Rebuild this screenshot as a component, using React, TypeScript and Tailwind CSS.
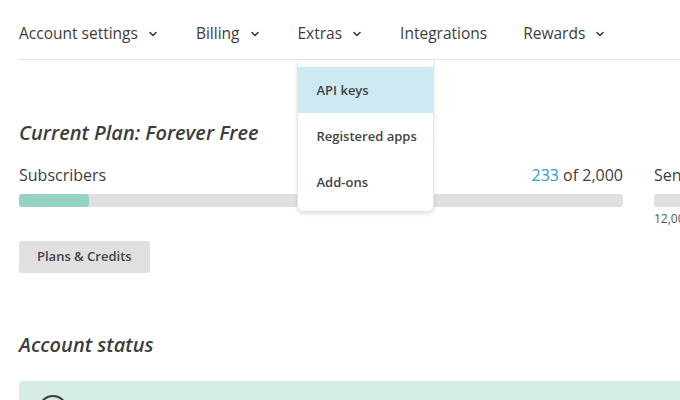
import { ChevronDown } from "lucide-react";

// Account page header with the "Extras" menu open.
const FONT = "font-['Open_Sans','Liberation_Sans',sans-serif]";

const navItems = [
  { label: "Account settings", menu: true },
  { label: "Billing", menu: true },
  { label: "Extras", menu: true, open: true },
  { label: "Integrations", menu: false },
  { label: "Rewards", menu: true }
];

const extras = [
  { label: "API keys", active: true },
  { label: "Registered apps", active: false },
  { label: "Add-ons", active: false }
];

function ExtrasMenu() {
  return (
    <div className="absolute left-[-1px] top-[39px] z-20 w-[137px] rounded-b-md border-x border-b border-[#e6e6e6] bg-white pb-[6px] pt-[6px] shadow-[0_2px_4px_rgba(0,0,0,0.12)]">
      {extras.map((it) => (
        <div
          key={it.label}
          className={[
            "flex h-[46px] items-center pl-[19px] text-[13px] font-semibold text-[#444]",
            it.active ? "bg-[#cde9f1]" : ""
          ].join(" ")}
        >
          {it.label}
        </div>
      ))}
    </div>
  );
}

function Usage({ label, used, total, pct, note }: { label: string; used: string; total: string; pct: number; note?: string }) {
  return (
    <div className="w-[604px] shrink-0">
      <div className="flex h-[24px] items-center justify-between text-[16px] text-[#3d3d3d]">
        <span>{label}</span>
        <span>
          <span className="text-[#2d9dc2]">{used}</span> of {total}
        </span>
      </div>
      <div className="mt-[7px] h-[13px] overflow-hidden rounded-[3px] bg-[#e0e0e0]">
        <div className="h-full rounded-[3px] bg-[#94d3c2]" style={{ width: `${pct}%` }} />
      </div>
      {note && <div className="mt-[4px] text-[12px] leading-[16px] text-[#555]">{note}</div>}
    </div>
  );
}

export default function App() {
  return (
    <div className={`${FONT} h-[400px] w-full overflow-hidden bg-white text-[#3d3d3d]`}>
      <nav className="ml-[19px] flex h-[60px] items-center gap-[36px] border-b border-[#e3e3e3] pt-[9px]">
        {navItems.map((it) => (
          <div key={it.label} className="relative flex items-center text-[15.5px] text-[#3d3d3d]">
            <span>{it.label}</span>
            {it.menu && (
              <span className="ml-[8px] flex w-[14px] justify-center">
                <ChevronDown size={12} strokeWidth={3.2} />
              </span>
            )}
            {it.open && <ExtrasMenu />}
          </div>
        ))}
      </nav>

      <main className="pl-[19px] pt-[59px]">
        <h2 className="text-[20px] font-semibold italic leading-[28px] text-[#3d3d3d]">Current Plan: Forever Free</h2>

        <div className="mt-[16px] flex items-start gap-[31px]">
          <Usage label="Subscribers" used="233" total="2,000" pct={11.6} />
          <Usage label="Sends" used="0" total="12,000" pct={0} note="12,000 sends left" />
        </div>

        <button className="mt-[14px] block h-[32px] rounded-[3px] bg-[#e0e0e0] px-[18px] text-[13px] font-semibold text-[#444]">
          Plans &amp; Credits
        </button>

        <h2 className="mt-[58px] text-[20px] font-semibold italic leading-[28px] text-[#3d3d3d]">Account status</h2>

        <div className="mt-[22px] flex h-[80px] w-[1239px] items-start rounded-[4px] bg-[#d5ede6] pl-[19px] pt-[14px]">
          <div className="h-[30px] w-[30px] rounded-full border-2 border-[#3d3d3d]" />
        </div>
      </main>
    </div>
  );
}
